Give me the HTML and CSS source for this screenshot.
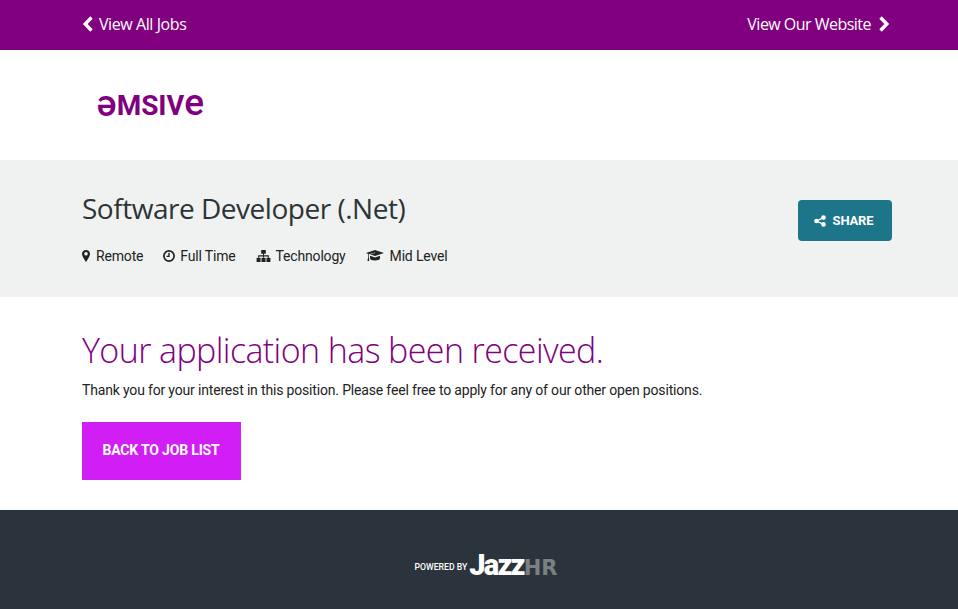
FILE: index.html
```html
<!DOCTYPE html>
<html lang="en">
<head>
    <meta charset="UTF-8">
    <meta name="viewport" content="width=device-width, initial-scale=1.0">
    <title>Software Developer (.Net)</title>
    <link rel="stylesheet" href="styles.css">
</head>
<body>
    <nav class="top-bar">
        <div class="container top-bar-inner">
            <a class="top-link" href="#">
                <svg class="chevron" viewBox="0 0 12 18"><polyline points="9.5,2.500 3.200,9 9.500,15.500"></polyline></svg>
                View All Jobs
            </a>
            <a class="top-link top-link-right" href="#">
                View Our Website
                <svg class="chevron" viewBox="0 0 12 18"><polyline points="2.500,2.500 8.800,9 2.500,15.500"></polyline></svg>
            </a>
        </div>
    </nav>

    <header class="logo-row">
        <div class="container">
            <span class="logo" aria-label="amsive"><span class="logo-a">e</span><span class="logo-caps">msi</span>ve</span>
        </div>
    </header>

    <section class="job-header">
        <div class="container job-header-inner">
            <div>
                <h1 class="job-title">Software Developer (.Net)</h1>
                <ul class="job-meta">
                    <li>
                        <svg class="meta-icon icon-marker" viewBox="0 0 8 12"><path fill-rule="evenodd" d="M4 0C1.800 0 0 1.700 0 3.900 0 6.300 2.600 9.800 4 12c1.400-2.200 4-5.700 4-8.100C8 1.700 6.200 0 4 0zm0 5.600A1.800 1.800 0 1 1 4 2a1.800 1.800 0 0 1 0 3.600z"></path></svg>
                        Remote
                    </li>
                    <li class="meta-tight">
                        <svg class="meta-icon icon-clock" viewBox="0 0 12 12"><circle cx="6" cy="6" r="5.100" fill="none" stroke="currentColor" stroke-width="1.700"></circle><path d="M5.300 2.800h1.400v4.100H3.500V5.700h1.800z"></path></svg>
                        Full Time
                    </li>
                    <li class="meta-tight">
                        <svg class="meta-icon icon-sitemap" viewBox="0 0 15 13"><path d="M5 0h5v4H8V5.800h5.300V8.500h-1.200V7H8v1.500H7V7H2.900v1.500H1.700V5.800H7V4H5z"></path><rect x="0" y="8.500" width="4.300" height="4.500"></rect><rect x="5.300" y="8.500" width="4.400" height="4.500"></rect><rect x="10.700" y="8.500" width="4.300" height="4.500"></rect></svg>
                        Technology
                    </li>
                    <li>
                        <svg class="meta-icon icon-cap" viewBox="0 0 18 12"><path d="M9 0l9 3-9 3-5-1.700L9.200 3 9 2.500 2.800 4.200v3.100l.5 3.700H1.500l.6-3.700V3.900L0 3z"></path><path d="M4 5.700l5 1.700 5-1.700v2.600C14 9.700 11.500 10.500 9 10.500S4 9.700 4 8.300z"></path></svg>
                        Mid Level
                    </li>
                </ul>
            </div>
            <a class="share-btn" href="#">
                <svg class="share-icon" viewBox="0 0 12 12"><circle cx="2.500" cy="6" r="2.300"></circle><circle cx="9.500" cy="2.600" r="2.300"></circle><circle cx="9.500" cy="9.400" r="2.300"></circle><path d="M2.500 6l7-3.400M2.500 6l7 3.400" stroke="currentColor" stroke-width="1.200"></path></svg>
                SHARE
            </a>
        </div>
    </section>

    <main class="confirmation">
        <div class="container">
            <h2 class="confirmation-title">Your application has been received.</h2>
            <p class="confirmation-text">Thank you for your interest in this position. Please feel free to apply for any of our other open positions.</p>
            <a class="back-btn" href="#">BACK TO JOB LIST</a>
        </div>
    </main>

    <footer class="footer">
        <span class="powered">POWERED BY</span>
        <span class="jazz">Jazz<span class="jazz-hr">HR</span></span>
    </footer>
</body>
</html>
```

FILE: styles.css
```css
* {
    box-sizing: border-box;
}

body {
    margin: 0;
    font-family: Roboto, Arial, sans-serif;
    font-size: 14px;
    letter-spacing: -0.17px;
    color: #222;
    background-color: #fff;
}

a {
    text-decoration: none;
}

.container {
    width: 810px;
    margin-left: 82px;
}

/* Top bar */
.top-bar {
    height: 50px;
    background-color: #800080;
}

.top-bar-inner {
    display: flex;
    justify-content: space-between;
    align-items: center;
    height: 100%;
    padding-bottom: 2px;
}

.top-link {
    display: flex;
    align-items: center;
    gap: 5px;
    color: #fff;
    font-family: "Open Sans", sans-serif;
    font-size: 16px;
    letter-spacing: -0.42px;
}

.top-link-right {
    gap: 7px;
    margin-right: 2px;
    letter-spacing: -0.52px;
}

.chevron {
    width: 12px;
    height: 18px;
    fill: none;
    stroke: #fff;
    stroke-width: 3.4;
}

/* Logo */
.logo-row {
    height: 110px;
    display: flex;
    align-items: center;
    padding-bottom: 1px;
}

.logo {
    display: block;
    margin-left: 15px;
    font-size: 37px;
    font-weight: 500;
    line-height: 40px;
    letter-spacing: 0;
    color: #800080;
}

.logo-a {
    display: inline-block;
    line-height: 1;
    transform: rotate(180deg);
    transform-origin: 50% 0.582em;
}

.logo-caps {
    font-size: 28px;
    font-weight: 700;
    letter-spacing: -0.2px;
    text-transform: uppercase;
}

/* Job header */
.job-header {
    height: 137px;
    background-color: #f0f2f2;
}

.job-header-inner {
    display: flex;
    justify-content: space-between;
    align-items: flex-start;
}

.job-title {
    margin: 26px 0 0;
    font-family: "Open Sans", sans-serif;
    font-size: 28px;
    font-weight: 400;
    line-height: 44px;
    letter-spacing: -0.48px;
    color: #2d3436;
}

.job-meta {
    display: flex;
    gap: 20px;
    margin: 16px 0 0;
    padding: 0;
    list-style: none;
    line-height: 20px;
}

.job-meta li {
    display: flex;
    align-items: center;
    gap: 6px;
}

.job-meta .meta-tight {
    gap: 5px;
}

.meta-icon {
    height: 12px;
    fill: currentColor;
}

.icon-marker {
    width: 8px;
}

.icon-clock {
    width: 12px;
}

.icon-sitemap {
    width: 15px;
}

.icon-cap {
    width: 18px;
}

.share-btn {
    display: flex;
    align-items: center;
    justify-content: center;
    gap: 7px;
    width: 94px;
    height: 41px;
    margin-top: 40px;
    padding-right: 3px;
    border-radius: 4px;
    background-color: #1d7589;
    color: #fff;
    font-size: 13px;
    font-weight: 700;
}

.share-icon {
    width: 12px;
    height: 12px;
    fill: currentColor;
}

/* Confirmation */
.confirmation {
    height: 213px;
    padding-top: 28px;
}

.confirmation-title {
    margin: 0;
    font-family: "Open Sans", sans-serif;
    font-size: 34px;
    font-weight: 300;
    line-height: 50px;
    letter-spacing: -0.6px;
    color: #800080;
}

.confirmation-text {
    margin: 5px 0 0;
    line-height: 20px;
}

.back-btn {
    display: flex;
    align-items: center;
    justify-content: center;
    width: 159px;
    height: 58px;
    margin-top: 22px;
    padding: 0 1px 2px 0;
    background-color: #d01ef5;
    color: #fff;
    font-weight: 700;
}

/* Footer */
.footer {
    display: flex;
    align-items: center;
    justify-content: center;
    gap: 2px;
    height: 99px;
    padding: 14px 0 0 14px;
    background-color: #2b343c;
}

.powered {
    color: #fff;
    font-size: 8.700px;
    font-weight: 500;
    letter-spacing: 0;
}

.jazz {
    font-size: 29px;
    font-weight: 900;
    letter-spacing: -1.800px;
    line-height: 30px;
    color: #fff;
}

.jazz-hr {
    font-family: "DejaVu Sans", sans-serif;
    font-size: 21px;
    letter-spacing: 0;
    color: #7b8084;
}
```
